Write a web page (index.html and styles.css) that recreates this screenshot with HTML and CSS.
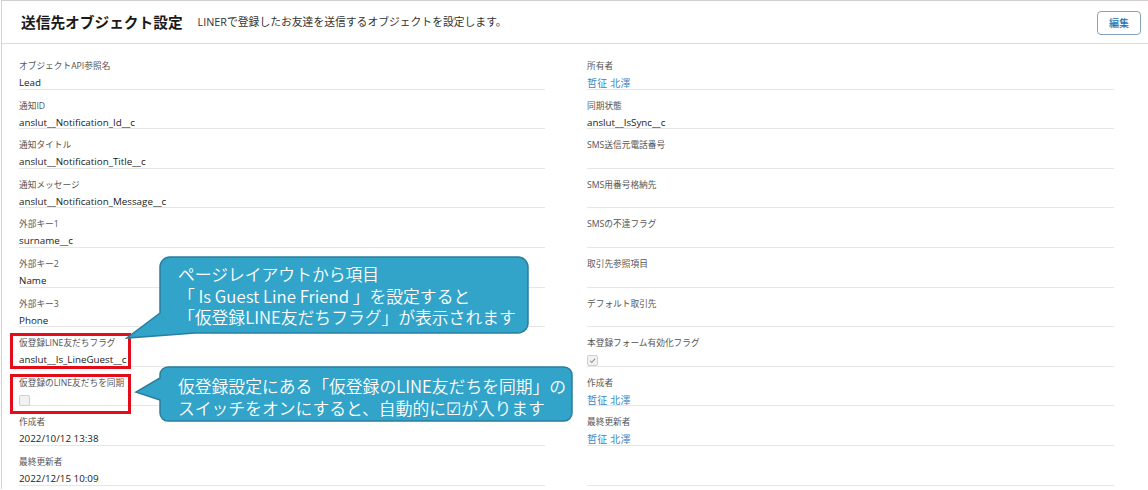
FILE: index.html
```html
<!DOCTYPE html>
<html lang="ja">
<head>
<meta charset="utf-8">
<title>送信先オブジェクト設定</title>
<link rel="stylesheet" href="styles.css">
</head>
<body>
<div class="page">
  <header class="hdr">
    <h1 class="title">送信先オブジェクト設定</h1>
    <span class="sub">LINERで登録したお友達を送信するオブジェクトを設定します。</span>
    <button class="edit">編集</button>
  </header>
  <div class="grid">
    <div class="col">
      <div class="row"><div class="lbl">オブジェクトAPI参照名</div><div class="val">Lead</div></div>
      <div class="row"><div class="lbl">通知ID</div><div class="val">anslut__Notification_Id__c</div></div>
      <div class="row"><div class="lbl">通知タイトル</div><div class="val">anslut__Notification_Title__c</div></div>
      <div class="row"><div class="lbl">通知メッセージ</div><div class="val">anslut__Notification_Message__c</div></div>
      <div class="row"><div class="lbl">外部キー1</div><div class="val">surname__c</div></div>
      <div class="row"><div class="lbl">外部キー2</div><div class="val">Name</div></div>
      <div class="row"><div class="lbl">外部キー3</div><div class="val">Phone</div></div>
      <div class="row"><div class="lbl">仮登録LINE友だちフラグ</div><div class="val">anslut__Is_LineGuest__c</div></div>
      <div class="row"><div class="lbl">仮登録のLINE友だちを同期</div><div class="val"><span class="cb"></span></div></div>
      <div class="row"><div class="lbl">作成者</div><div class="val">2022/10/12 13:38</div></div>
      <div class="row"><div class="lbl">最終更新者</div><div class="val">2022/12/15 10:09</div></div>
    </div>
    <div class="col">
      <div class="row"><div class="lbl">所有者</div><div class="val link">哲征 北澤</div></div>
      <div class="row"><div class="lbl">同期状態</div><div class="val">anslut__IsSync__c</div></div>
      <div class="row"><div class="lbl">SMS送信元電話番号</div><div class="val"></div></div>
      <div class="row"><div class="lbl">SMS用番号格納先</div><div class="val"></div></div>
      <div class="row"><div class="lbl">SMSの不達フラグ</div><div class="val"></div></div>
      <div class="row"><div class="lbl">取引先参照項目</div><div class="val"></div></div>
      <div class="row"><div class="lbl">デフォルト取引先</div><div class="val"></div></div>
      <div class="row"><div class="lbl">本登録フォーム有効化フラグ</div><div class="val"><span class="cb checked"><svg viewBox="0 0 11 11" width="11" height="11"><path d="M3 5.8 L4.8 7.4 L8.2 3.6" fill="none" stroke="#9a9a9a" stroke-width="1.1"/></svg></span></div></div>
      <div class="row"><div class="lbl">作成者</div><div class="val link">哲征 北澤</div></div>
      <div class="row"><div class="lbl">最終更新者</div><div class="val link">哲征 北澤</div></div>
      <div class="row"><div class="lbl">&nbsp;</div><div class="val"></div></div>
    </div>
  </div>
</div>

<div class="redbox rb1"></div>
<div class="redbox rb2"></div>

<div class="callout c1">
  <svg class="shape" width="406" height="86" viewBox="0 0 406 86"><path d="M45,2 H393 A10,10 0 0 1 403,12 V68 A10,10 0 0 1 393,78 H70 L2,83 L35,58 V12 A10,10 0 0 1 45,2 Z" fill="#32a4ca" stroke="#2a7e9e" stroke-width="1.5"/></svg>
  <div class="ctext">ページレイアウトから項目<br>「 Is Guest Line Friend 」を設定すると<br>「仮登録LINE友だちフラグ」が表示されます</div>
</div>

<div class="callout c2">
  <svg class="shape" width="440" height="58" viewBox="0 0 440 58"><path d="M34,2 H430 A8,8 0 0 1 438,10 V48 A8,8 0 0 1 430,56 H34 A8,8 0 0 1 26,48 V35 L2,27 L26,13 V10 A8,8 0 0 1 34,2 Z" fill="#32a4ca" stroke="#2a7e9e" stroke-width="1.5"/></svg>
  <div class="ctext">仮登録設定にある「仮登録のLINE友だちを同期」の<br>スイッチをオンにすると、自動的に☑が入ります</div>
</div>
</body>
</html>
```

FILE: styles.css
```css
html, body {
  margin: 0;
  padding: 0;
  background: #fff;
}
body {
  position: relative;
  width: 1148px;
  height: 490px;
  overflow: hidden;
  font-family: "Open Sans", "Noto Sans CJK JP", sans-serif;
  color: #222;
}
.page {
  margin-left: 1px;
  border-top: 1px solid #cfcfcf;
  border-left: 1px solid #d2d2d2;
  height: 489px;
  box-sizing: border-box;
}
.hdr {
  display: flex;
  align-items: center;
  height: 43px;
  box-sizing: border-box;
  border-bottom: 1px solid #dcdcdc;
  padding-left: 19px;
  padding-right: 7px;
}
.title {
  margin: 0;
  font-family: "Noto Sans CJK JP", sans-serif;
  font-size: 14.7px;
  font-weight: 700;
  color: #1a1a1a;
  line-height: 20px;
}
.sub {
  margin-left: 15px;
  font-size: 10.8px;
  color: #333;
  line-height: 16px;
}
.edit {
  margin-left: auto;
  width: 44px;
  height: 24px;
  border: 1px solid #86a2b6;
  border-radius: 4px;
  background: #fff;
  color: #2a6fa8;
  font-family: "Noto Sans CJK JP", sans-serif;
  font-size: 10px;
  font-weight: 500;
  padding: 0;
  margin-top: 1px;
}
.grid {
  display: grid;
  grid-template-columns: 526px 527px;
  column-gap: 42px;
  padding-left: 17px;
  padding-top: 6px;
}
.row {
  height: 39.6px;
  box-sizing: border-box;
  padding-top: 8px;
  border-bottom: 1px solid #e6e6e6;
}
.lbl {
  font-size: 8.7px;
  line-height: 16px;
  color: #555;
  white-space: nowrap;
}
.val {
  margin-top: 3px;
  font-size: 9.8px;
  line-height: 12px;
  height: 12px;
  color: #222;
  white-space: nowrap;
}
.val.link {
  color: #3a86c2;
  font-size: 10px;
  letter-spacing: 0.2px;
}
.cb {
  display: inline-block;
  width: 11px;
  height: 11px;
  box-sizing: border-box;
  border: 1px solid #cfcfcf;
  background: #f2f2f2;
  border-radius: 2px;
  vertical-align: top;
  margin-top: 1px;
  position: relative;
}
.cb svg {
  position: absolute;
  left: -1px;
  top: -1px;
}
.redbox {
  position: absolute;
  left: 10px;
  width: 121px;
  border: 3px solid #e50c1a;
  box-sizing: border-box;
}
.rb1 { top: 333px; height: 36px; }
.rb2 { top: 374px; height: 40px; }
.callout {
  position: absolute;
}
.callout .shape {
  position: absolute;
  left: 0;
  top: 0;
}
.ctext {
  position: relative;
  font-family: "Noto Sans CJK JP", sans-serif;
  font-size: 16.8px;
  font-weight: 350;
  line-height: 21.5px;
  color: #fff;
  white-space: nowrap;
}
.c1 { left: 125px; top: 255px; width: 406px; height: 86px; }
.c1 .ctext { padding-left: 53px; padding-top: 9px; }
.c2 { left: 134px; top: 365px; width: 440px; height: 58px; }
.c2 .ctext { padding-left: 44px; padding-top: 11px; }
```
